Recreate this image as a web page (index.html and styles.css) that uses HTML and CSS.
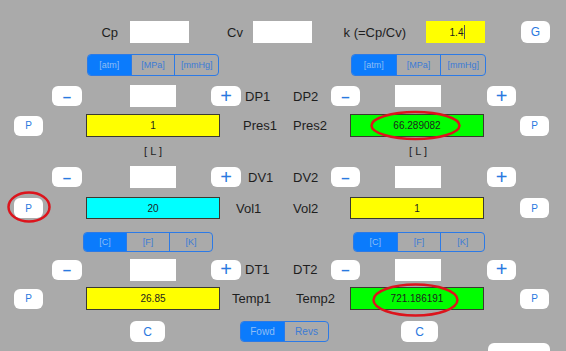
FILE: index.html
```html
<!DOCTYPE html>
<html lang="en">
<head>
<meta charset="UTF-8">
<meta name="viewport" content="width=device-width, initial-scale=1.0">
<title>Gas Law</title>
<link rel="stylesheet" href="styles.css">
</head>
<body>
    <div class="screen">
        <div class="row top">
            <span class="label cp">Cp</span>
            <span class="field blank cp-in"></span>
            <span class="label cv">Cv</span>
            <span class="field blank cv-in"></span>
            <span class="label k">k (=Cp/Cv)</span>
            <span class="field k-in">1.4<span class="caret"></span></span>
            <button class="btn g">G</button>
        </div>

        <div class="row units pres-units">
            <div class="seg w132"><span class="on">[atm]</span><span>[MPa]</span><span>[mmHg]</span></div>
            <div class="seg w135"><span class="on">[atm]</span><span>[MPa]</span><span>[mmHg]</span></div>
        </div>

        <div class="row delta dp">
            <button class="btn minus">&ndash;</button>
            <span class="field blank step"></span>
            <button class="btn plus">+</button>
            <span class="label d1">DP1</span>
            <span class="label d2">DP2</span>
            <button class="btn minus r">&ndash;</button>
            <span class="field blank step r"></span>
            <button class="btn plus r">+</button>
        </div>

        <div class="row value">
            <button class="btn p">P</button>
            <span class="box yellow">1</span>
            <span class="label v1 pres1">Pres1</span>
            <span class="label v2">Pres2</span>
            <span class="box green">66.289082</span>
            <button class="btn p r">P</button>
        </div>

        <div class="row unit-l">
            <span class="l1">[ L ]</span>
            <span class="l2">[ L ]</span>
        </div>

        <div class="row delta dv">
            <button class="btn minus">&ndash;</button>
            <span class="field blank step"></span>
            <button class="btn plus">+</button>
            <span class="label d1 dv1">DV1</span>
            <span class="label d2">DV2</span>
            <button class="btn minus r">&ndash;</button>
            <span class="field blank step r"></span>
            <button class="btn plus r">+</button>
        </div>

        <div class="row value vol">
            <button class="btn p">P</button>
            <span class="box cyan">20</span>
            <span class="label v1 vol1">Vol1</span>
            <span class="label v2">Vol2</span>
            <span class="box yellow">1</span>
            <button class="btn p r">P</button>
        </div>

        <div class="row units temp-units">
            <div class="seg w130"><span class="on">[C]</span><span>[F]</span><span>[K]</span></div>
            <div class="seg w132"><span class="on">[C]</span><span>[F]</span><span>[K]</span></div>
        </div>

        <div class="row delta dt">
            <button class="btn minus">&ndash;</button>
            <span class="field blank step"></span>
            <button class="btn plus">+</button>
            <span class="label d1">DT1</span>
            <span class="label d2">DT2</span>
            <button class="btn minus r">&ndash;</button>
            <span class="field blank step r"></span>
            <button class="btn plus r">+</button>
        </div>

        <div class="row value temp">
            <button class="btn p">P</button>
            <span class="box yellow">26.85</span>
            <span class="label v1 temp1">Temp1</span>
            <span class="label v2 temp2">Temp2</span>
            <span class="box green">721.186191</span>
            <button class="btn p r">P</button>
        </div>

        <div class="row bottom">
            <button class="btn c">C</button>
            <div class="seg dir"><span class="on">Fowd</span><span>Revs</span></div>
            <button class="btn c r">C</button>
        </div>

        <div class="row more">
            <button class="btn wide"></button>
        </div>

        <svg class="marks" width="566" height="351" viewBox="0 0 566 351">
            <ellipse cx="415.5" cy="125.5" rx="44" ry="13.5"/>
            <ellipse cx="415.5" cy="300" rx="42" ry="15.5"/>
            <ellipse cx="29" cy="207" rx="20.5" ry="14.5"/>
        </svg>
    </div>
</body>
</html>
```

FILE: styles.css
```css
body {
    margin: 0;
    background-color: #aaaaaa;
    font-family: "Liberation Sans", Arial, sans-serif;
    color: #1e1e1e;
    overflow: hidden;
}
.screen {
    position: relative;
    width: 566px;
    height: 351px;
    padding-top: 21px;
    box-sizing: border-box;
}
.row {
    display: flex;
    align-items: center;
}
.label {
    font-size: 13px;
}
.field {
    display: flex;
    align-items: center;
    justify-content: center;
    box-sizing: border-box;
    font-size: 10px;
}
.blank {
    background-color: #fff;
}
.btn {
    display: flex;
    align-items: center;
    justify-content: center;
    padding: 0;
    border: none;
    border-radius: 6px;
    background-color: #fff;
    color: #2a79e0;
    font-family: "Liberation Sans", Arial, sans-serif;
    font-size: 11px;
}

/* top row */
.top {
    height: 22px;
}
.top .field {
    width: 59px;
    height: 22px;
}
.cp {
    width: 118px;
    text-align: right;
}
.cp-in {
    margin-left: 12px;
}
.cv {
    width: 54px;
    text-align: right;
}
.cv-in {
    margin-left: 10px;
}
.k {
    width: 94px;
    text-align: right;
}
.k-in {
    margin-left: 20px;
    background-color: #ffff00;
    padding-left: 4px;
}
.caret {
    width: 1px;
    height: 14px;
    margin-left: 1px;
    background-color: #555;
}
.btn.g {
    margin-left: 36px;
    width: 29px;
    height: 22px;
    font-size: 12px;
}

/* segmented controls */
.seg {
    display: flex;
    height: 100%;
    box-sizing: border-box;
    border: 1px solid #2c7ae6;
    border-radius: 4px;
    overflow: hidden;
}
.seg span {
    flex: 1;
    display: flex;
    align-items: center;
    justify-content: center;
    border-left: 1px solid #2c7ae6;
    font-size: 9px;
    color: #3b7bd6;
}
.seg span:first-child {
    border-left: none;
}
.seg .on {
    background-color: #0b7bfc;
    color: #8fbef5;
}
.w132 { width: 132px; }
.w135 { width: 135px; }
.w130 { width: 130px; }
.pres-units {
    margin-top: 11px;
    height: 22px;
    padding-left: 87px;
    gap: 132px;
}
.temp-units {
    margin-top: 13px;
    height: 20px;
    padding-left: 83px;
    gap: 140px;
}

/* step rows */
.delta {
    height: 24px;
}
.dp {
    margin-top: 8px;
}
.dt {
    margin-top: 6px;
    height: 23px;
}
.btn.minus,
.btn.plus {
    width: 30px;
    height: 20px;
}
.btn.minus {
    margin-left: 52px;
    font-size: 15px;
    font-weight: bold;
}
.btn.plus {
    margin-left: 35px;
    font-size: 20px;
}
.step {
    margin-left: 48px;
    width: 46px;
    height: 22px;
}
.d1 {
    width: 38px;
    padding-left: 4px;
}
.dv1 {
    padding-left: 7px;
    width: 35px;
}
.d2 {
    width: 38px;
    padding-left: 10px;
}
.btn.minus.r {
    margin-left: 0;
    width: 29px;
}
.step.r {
    margin-left: 35px;
}
.btn.plus.r {
    margin-left: 46px;
    width: 29px;
}

/* value rows */
.value {
    margin-top: 6px;
    height: 23px;
}
.vol {
    margin-top: 8px;
    height: 22px;
}
.btn.p {
    margin-left: 14px;
    width: 29px;
    height: 20px;
    font-size: 10px;
}
.btn.p.r {
    margin-left: 36px;
}
.box {
    display: flex;
    align-items: center;
    justify-content: center;
    width: 134px;
    height: 100%;
    box-sizing: border-box;
    border: 1px solid #3a3a30;
    font-size: 10px;
}
.value .box:nth-child(2) {
    margin-left: 43px;
}
.yellow { background-color: #ffff00; }
.green { background-color: #00fe00; }
.cyan { background-color: #00ffff; }
.v1 {
    width: 40px;
    padding-left: 23px;
}
.vol1 {
    width: 47px;
    padding-left: 16px;
}
.temp1 {
    width: 51px;
    padding-left: 12px;
}
.v2 {
    width: 57px;
    padding-left: 10px;
}
.temp2 {
    width: 54px;
    padding-left: 13px;
}

/* [ L ] */
.unit-l {
    height: 28px;
    font-size: 11px;
}
.l1,
.l2 {
    width: 46px;
    text-align: center;
}
.l1 {
    margin-left: 130px;
}
.l2 {
    margin-left: 219px;
}

/* bottom */
.bottom {
    margin-top: 11px;
    height: 21px;
}
.btn.c {
    margin-left: 130px;
    width: 35px;
    height: 21px;
    font-size: 12px;
}
.btn.c.r {
    margin-left: 72px;
    width: 37px;
}
.dir {
    margin-left: 75px;
    width: 89px;
}
.dir span {
    font-size: 10px;
}
.more {
    margin-top: 1px;
    height: 20px;
}
.btn.wide {
    margin-left: 488px;
    width: 62px;
    height: 20px;
}

.marks {
    position: absolute;
    left: 0;
    top: 0;
    pointer-events: none;
}
.marks ellipse {
    fill: none;
    stroke: #dc141c;
    stroke-width: 2.5;
}
```
